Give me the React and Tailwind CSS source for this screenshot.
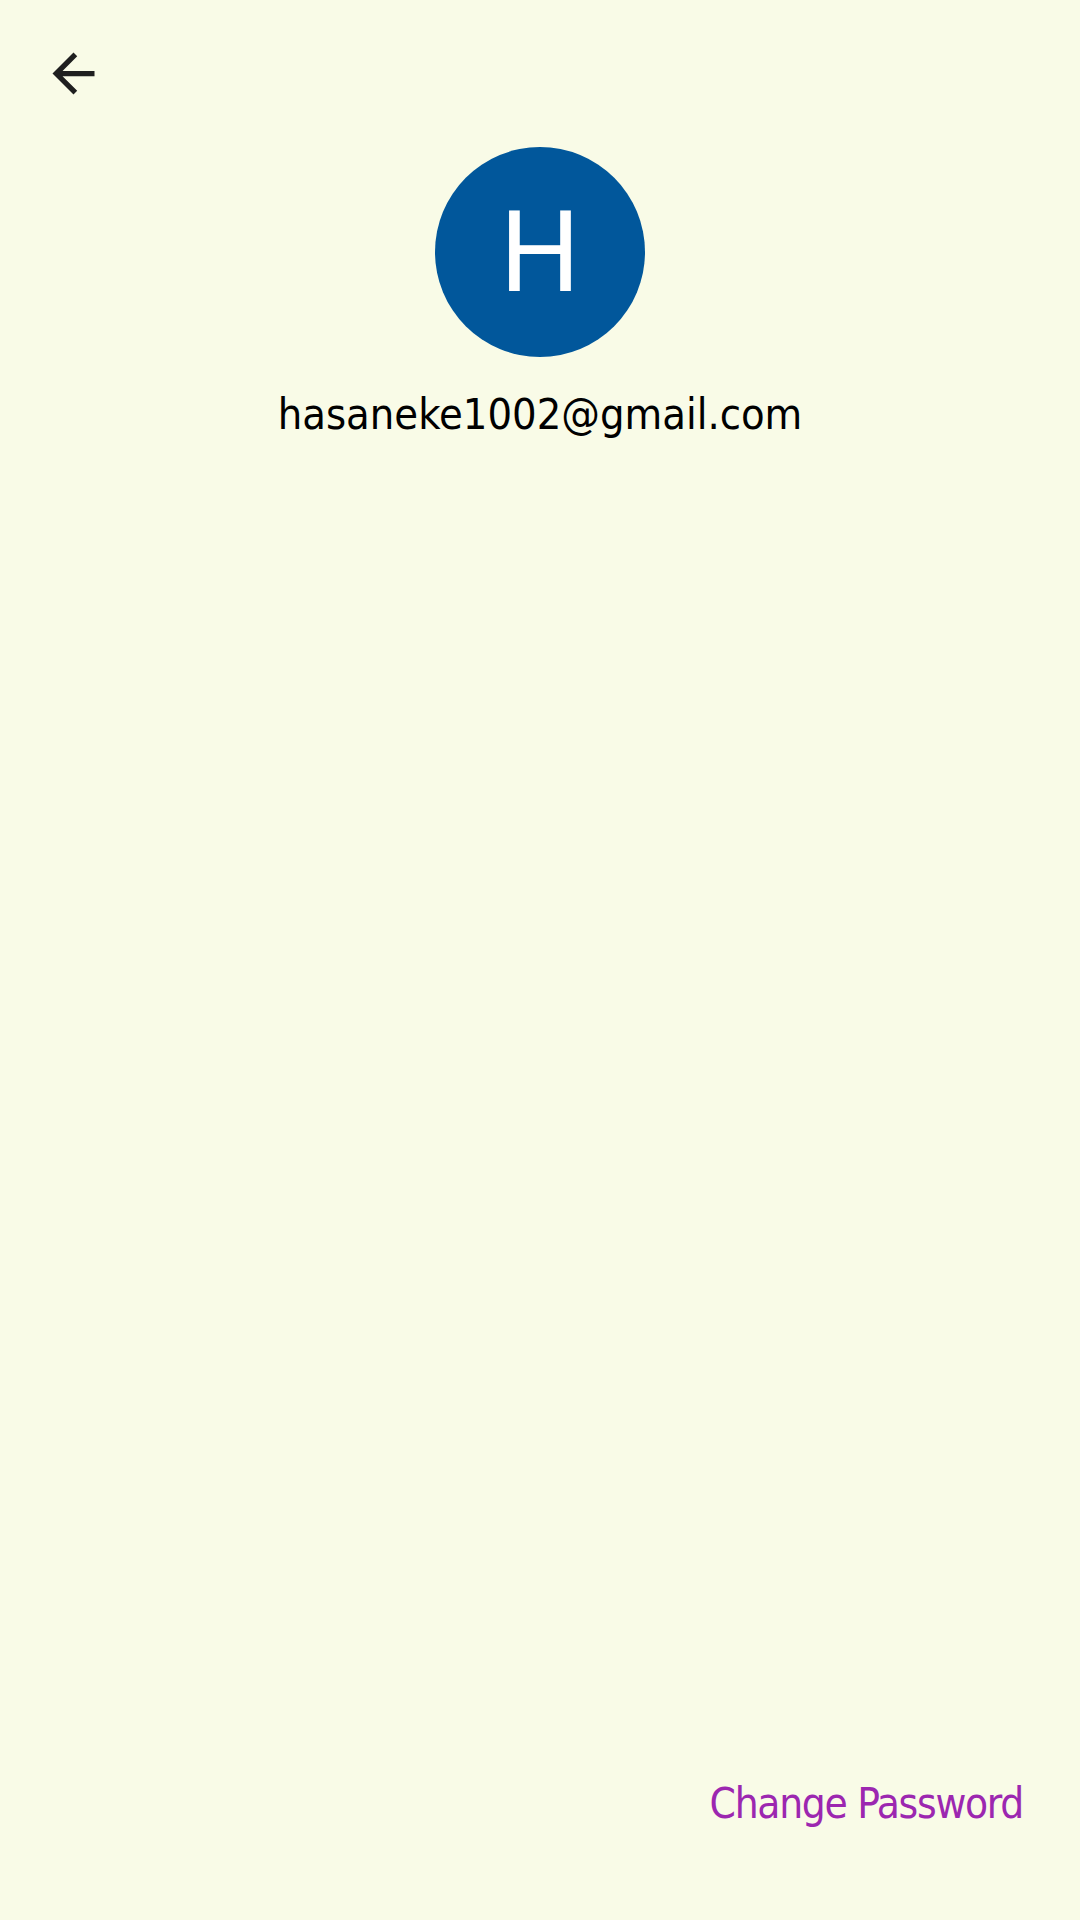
export default function App() {
  return (
    <div className="w-[1080px] h-[1920px] bg-[#F9FBE7] flex flex-col overflow-hidden">
      {/* top bar */}
      <div className="pt-[42px] pl-[42px]">
        <button className="w-[63px] h-[63px] flex items-center justify-center text-[#1f1f1f]">
          <svg viewBox="0 0 24 24" className="w-[63px] h-[63px]" fill="currentColor">
            <path d="M20 11H7.83l5.59-5.59L12 4l-8 8 8 8 1.41-1.41L7.83 13H20v-2z" />
          </svg>
        </button>
      </div>

      {/* profile */}
      <div className="flex flex-col items-center mt-[42px]">
        <div className="w-[210px] h-[210px] rounded-full bg-[#01579B] flex items-center justify-center">
          <span className="text-white text-[113px] leading-none font-['Roboto',sans-serif]">H</span>
        </div>
        <p className="mt-[25px] text-[43px] leading-[64px] text-black font-['DejaVu_Sans_Condensed','DejaVu_Sans',sans-serif]">
          hasaneke1002@gmail.com
        </p>
      </div>

      <div className="flex-1" />

      {/* bottom action */}
      <div className="flex justify-end pr-[57px] pb-[86px]">
        <button className="text-[42px] leading-[60px] tracking-[-1.3px] text-[#9C27B0] font-['DejaVu_Sans_Condensed','DejaVu_Sans',sans-serif]">
          Change Password
        </button>
      </div>
    </div>
  );
}
